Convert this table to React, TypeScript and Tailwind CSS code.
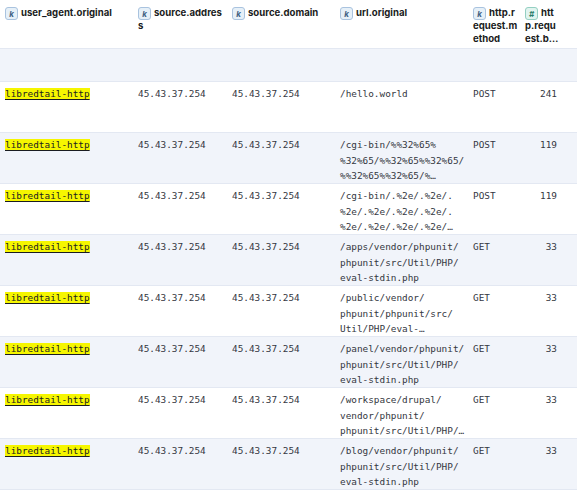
import React from "react";

type Row = { url: string[]; method: string; bytes: string };

// url lines are split the way the grid wraps them (after "/")
const ROWS: Row[] = [
  { url: ["/hello.world"], method: "POST", bytes: "241" },
  { url: ["/cgi-bin/%%32%65%", "%32%65/%%32%65%%32%65/", "%%32%65%%32%65/%…"], method: "POST", bytes: "119" },
  { url: ["/cgi-bin/.%2e/.%2e/.", "%2e/.%2e/.%2e/.%2e/.", "%2e/.%2e/.%2e/.%2e/…"], method: "POST", bytes: "119" },
  { url: ["/apps/vendor/phpunit/", "phpunit/src/Util/PHP/", "eval-stdin.php"], method: "GET", bytes: "33" },
  { url: ["/public/vendor/", "phpunit/phpunit/src/", "Util/PHP/eval-…"], method: "GET", bytes: "33" },
  { url: ["/panel/vendor/phpunit/", "phpunit/src/Util/PHP/", "eval-stdin.php"], method: "GET", bytes: "33" },
  { url: ["/workspace/drupal/", "vendor/phpunit/", "phpunit/src/Util/PHP/…"], method: "GET", bytes: "33" },
  { url: ["/blog/vendor/phpunit/", "phpunit/src/Util/PHP/", "eval-stdin.php"], method: "GET", bytes: "33" },
];

const COLS = "grid grid-cols-[133px_94px_108px_133px_52px_57px]";
const MONO = "font-['DejaVu_Sans_Mono',monospace] text-[9.4px] leading-[15.7px] text-[#343741]";

// small field-type token shown inline before each column name
function Token({ kind }: { kind: "k" | "#" }) {
  const tone =
    kind === "k"
      ? "bg-[#e6f0f8] border-[#a9c3df] text-[#3f5f83]"
      : "bg-[#e1f4ef] border-[#94cfc2] text-[#2b7c6a]";
  return (
    <span
      className={`mr-[3px] inline-flex h-[13px] w-[13px] items-center justify-center rounded-[3px] border align-top text-[8px] font-bold italic leading-none ${tone}`}
    >
      {kind}
    </span>
  );
}

// header names wrap under the token, as the grid draws them
function HeaderCell({ kind, lines }: { kind: "k" | "#"; lines: string[] }) {
  return (
    <div className="overflow-hidden whitespace-nowrap pl-[5px] pt-[7px] text-[9.6px] font-bold leading-[12.6px] text-[#1a1c21]">
      <Token kind={kind} />
      {lines.map((l, j) => (
        <React.Fragment key={j}>
          {j > 0 && <br />}
          {l}
        </React.Fragment>
      ))}
    </div>
  );
}

export default function App() {
  return (
    <div className="h-[494px] w-[577px] overflow-hidden bg-white font-['Inter',sans-serif]">
      <div className={`${COLS} h-[49px] border-b border-[#e3e8f2]`}>
        <HeaderCell kind="k" lines={["user_agent.original"]} />
        <HeaderCell kind="k" lines={["source.addres", "s"]} />
        <HeaderCell kind="k" lines={["source.domain"]} />
        <HeaderCell kind="k" lines={["url.original"]} />
        <HeaderCell kind="k" lines={["http.r", "equest.m", "ethod"]} />
        <HeaderCell kind="#" lines={["htt", "p.requ", "est.b…"]} />
      </div>

      <div className="h-[33px] border-b border-[#e3e8f2] bg-[#f1f4fa]" />

      {ROWS.map((r, i) => (
        <div
          key={i}
          className={`${COLS} h-[51px] overflow-hidden border-b border-[#e3e8f2] ${MONO} ${
            i % 2 === 1 ? "bg-[#f1f4fa]" : "bg-white"
          }`}
        >
          <div className="pl-[5px] pt-[4px]">
            <mark className="bg-[#f6f600] text-[#1a1c21] underline decoration-[#1a1c21] underline-offset-[2px]">
              libredtail-http
            </mark>
          </div>
          <div className="pl-[5px] pt-[4px]">45.43.37.254</div>
          <div className="pl-[5px] pt-[4px]">45.43.37.254</div>
          <div className="flex flex-col pl-[5px] pt-[4px]">
            {r.url.map((line, j) => (
              <span key={j} className="whitespace-nowrap">
                {line}
              </span>
            ))}
          </div>
          <div className="pl-[5px] pt-[4px]">{r.method}</div>
          <div className="pr-[20px] pt-[4px] text-right">{r.bytes}</div>
        </div>
      ))}
    </div>
  );
}
